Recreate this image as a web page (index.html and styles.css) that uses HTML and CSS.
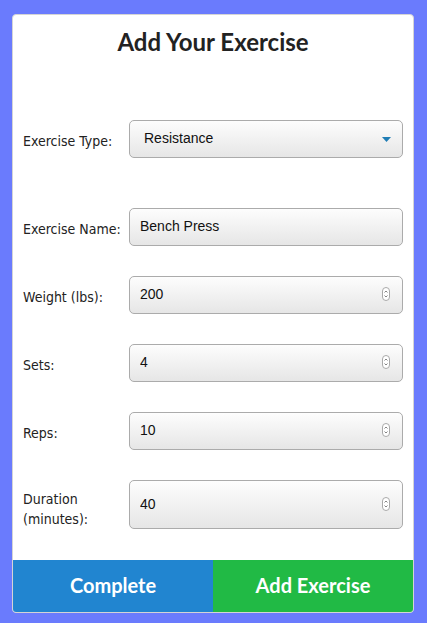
FILE: index.html
```html
<!DOCTYPE html>
<html>
<head>
<meta charset="utf-8">
<link rel="stylesheet" href="styles.css">
</head>
<body>
<div class="card">
  <h2 class="title">Add Your Exercise</h2>
  <form class="form">
    <div class="row row-first">
      <label class="label">Exercise Type:</label>
      <div class="field field-select">
        <span class="value">Resistance</span>
        <svg class="caret" width="9" height="5" viewBox="0 0 9 5"><path d="M0 0H9L4.5 5Z" fill="#1f7db5"/></svg>
      </div>
    </div>
    <div class="row row-name">
      <label class="label">Exercise Name:</label>
      <div class="field">
        <input class="input" type="text" value="Bench Press">
      </div>
    </div>
    <div class="row">
      <label class="label">Weight (lbs):</label>
      <div class="field">
        <input class="input" type="text" value="200">
        <svg class="spin" width="8" height="14" viewBox="0 0 8 14"><rect x="0.5" y="0.5" width="7" height="13" rx="3.5" fill="#fff" stroke="#a9a9a9"/><path d="M2.5 5.5L4 4L5.5 5.5M2.5 8.5L4 10L5.5 8.5" fill="none" stroke="#777" stroke-width="0.9"/></svg>
      </div>
    </div>
    <div class="row">
      <label class="label">Sets:</label>
      <div class="field">
        <input class="input" type="text" value="4">
        <svg class="spin" width="8" height="14" viewBox="0 0 8 14"><rect x="0.5" y="0.5" width="7" height="13" rx="3.5" fill="#fff" stroke="#a9a9a9"/><path d="M2.5 5.5L4 4L5.5 5.5M2.5 8.5L4 10L5.5 8.5" fill="none" stroke="#777" stroke-width="0.9"/></svg>
      </div>
    </div>
    <div class="row">
      <label class="label">Reps:</label>
      <div class="field">
        <input class="input" type="text" value="10">
        <svg class="spin" width="8" height="14" viewBox="0 0 8 14"><rect x="0.5" y="0.5" width="7" height="13" rx="3.5" fill="#fff" stroke="#a9a9a9"/><path d="M2.5 5.5L4 4L5.5 5.5M2.5 8.5L4 10L5.5 8.5" fill="none" stroke="#777" stroke-width="0.9"/></svg>
      </div>
    </div>
    <div class="row">
      <label class="label label-tall">Duration (minutes):</label>
      <div class="field field-tall">
        <input class="input" type="text" value="40">
        <svg class="spin" width="8" height="14" viewBox="0 0 8 14"><rect x="0.5" y="0.5" width="7" height="13" rx="3.5" fill="#fff" stroke="#a9a9a9"/><path d="M2.5 5.5L4 4L5.5 5.5M2.5 8.5L4 10L5.5 8.5" fill="none" stroke="#777" stroke-width="0.9"/></svg>
      </div>
    </div>
  </form>
  <div class="buttons">
    <button class="btn btn-blue" type="button">Complete</button>
    <button class="btn btn-green" type="button">Add Exercise</button>
  </div>
</div>
</body>
</html>
```
FILE: styles.css
```css
html, body {
  margin: 0;
  padding: 0;
}
body {
  background: #6a7bfd;
  padding: 14px 13px 0 12px;
  height: 623px;
  box-sizing: border-box;
}
.card {
  background: #fff;
  border: 1px solid #d4d4d5;
  border-radius: 4px;
  height: 599px;
  box-sizing: border-box;
  display: flex;
  flex-direction: column;
  overflow: hidden;
}
.title {
  margin: 13px 0 0;
  font-family: Lato, sans-serif;
  font-weight: 700;
  font-size: 24px;
  line-height: 28px;
  color: #222;
  text-align: center;
}
.form {
  flex: 1;
  display: flex;
  flex-direction: column;
  gap: 30px;
  padding: 64px 10px 0 10px;
}
.row {
  display: flex;
  align-items: center;
}
.row-name {
  margin-top: 20px;
}
.label {
  width: 106px;
  flex: none;
  font-family: "DejaVu Sans Condensed", "DejaVu Sans", sans-serif;
  font-size: 14px;
  line-height: 20px;
  color: #222;
  padding-top: 4px;
}
.label-tall {
  padding-top: 9px;
}
.field {
  flex: 1;
  height: 38px;
  box-sizing: border-box;
  border: 1px solid #ababab;
  border-radius: 5px;
  background: linear-gradient(#fdfdfd, #e6e6e6);
  display: flex;
  align-items: center;
  padding: 0 12px 2px 10px;
}
.field-tall {
  height: 49px;
}
.field-select {
  padding-left: 14px;
  padding-right: 11px;
}
.value, .input {
  flex: 1;
  font-family: "Liberation Sans", Arial, sans-serif;
  font-size: 14px;
  color: #111;
}
.input {
  border: none;
  background: transparent;
  padding: 0;
  margin: 0;
  outline: none;
  min-width: 0;
}
.caret {
  flex: none;
  margin-top: 2px;
}
.spin {
  flex: none;
}
.buttons {
  display: flex;
  height: 52px;
}
.btn {
  flex: 1;
  border: none;
  margin: 0;
  font-family: Lato, sans-serif;
  font-weight: 700;
  font-size: 20px;
  color: #fff;
  padding: 0 0 2px;
}
.btn-blue {
  background: #2185d0;
}
.btn-green {
  background: #21ba45;
}
```
